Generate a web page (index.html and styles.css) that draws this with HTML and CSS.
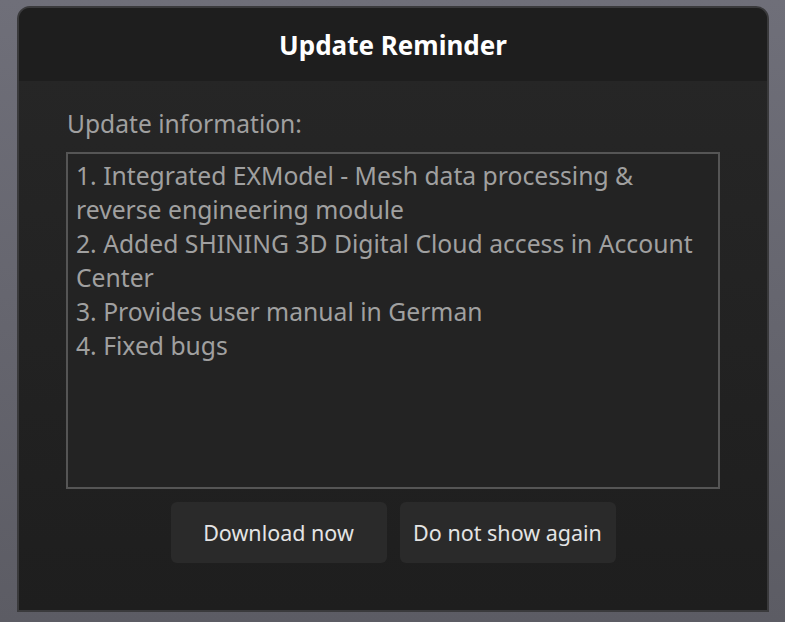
FILE: index.html
```html
<!DOCTYPE html>
<html>
<head>
<meta charset="utf-8">
<link rel="stylesheet" href="styles.css">
</head>
<body>
<div class="dialog">
  <div class="header">Update Reminder</div>
  <div class="content">
    <div class="label">Update information:</div>
    <div class="notes">
      <div>1. Integrated EXModel - Mesh data processing &amp; reverse engineering module</div>
      <div>2. Added SHINING 3D Digital Cloud access in Account Center</div>
      <div>3. Provides user manual in German</div>
      <div>4. Fixed bugs</div>
    </div>
    <div class="actions">
      <button class="btn">Download now</button>
      <button class="btn">Do not show again</button>
    </div>
  </div>
</div>
</body>
</html>
```
FILE: styles.css
```css
html, body {
  margin: 0;
  padding: 0;
  width: 785px;
  height: 622px;
  overflow: hidden;
}
body {
  background: linear-gradient(180deg, #6f6f79 0%, #5c5c64 100%);
  font-family: "Noto Sans", "Open Sans", sans-serif;
}
.dialog {
  box-sizing: border-box;
  margin: 6px 0 0 17px;
  width: 752px;
  height: 606px;
  border: 2px solid #3a3a3c;
  border-radius: 13px 13px 0 0;
  background: linear-gradient(180deg, #272727 0%, #1e1e1e 100%);
  display: flex;
  flex-direction: column;
  overflow: hidden;
}
.header {
  height: 73px;
  flex: none;
  background: #1e1e1e;
  color: #ffffff;
  font-weight: 700;
  font-size: 26px;
  display: flex;
  align-items: center;
  justify-content: center;
  box-sizing: border-box;
}
.content {
  flex: 1;
  padding: 27px 0 0 47px;
  display: flex;
  flex-direction: column;
}
.label {
  color: #a0a0a0;
  font-size: 24.6px;
  line-height: 34px;
  margin-left: 1px;
  margin-bottom: 11px;
  margin-top: -1px;
}
.notes {
  box-sizing: border-box;
  width: 654px;
  height: 337px;
  border: 2px solid #555555;
  background: #232323;
  color: #a0a0a0;
  font-size: 24.7px;
  line-height: 34px;
  padding: 5px 8px 0 8px;
}
.actions {
  width: 654px;
  display: flex;
  justify-content: center;
  gap: 13px;
  margin-top: 13px;
}
.btn {
  width: 216px;
  height: 61px;
  border: none;
  border-radius: 6px;
  background: #2a2a2a;
  color: #e4e4e4;
  font-family: "Noto Sans", "Open Sans", sans-serif;
  font-size: 21.5px;
  padding: 0;
}
```
